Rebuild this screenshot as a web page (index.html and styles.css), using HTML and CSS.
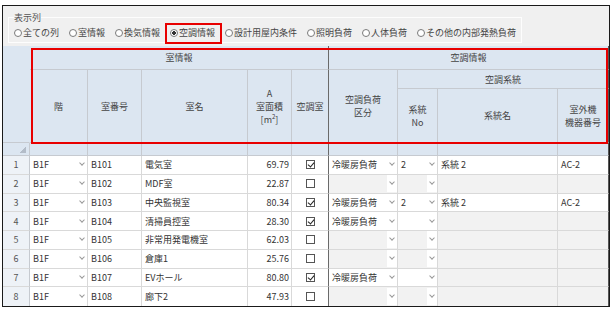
FILE: index.html
```
<!doctype html>
<html>
  <head>
    <title>空調情報</title>
    <meta charset="utf-8">
    <link rel="stylesheet" href="styles.css">
  </head>
  <body>
    <div class="frame">
      <div class="opts">
        <fieldset class="cols">
          <legend>表示列</legend>
          <div class="rbs">
            <label class="rb"><i></i>全ての列</label>
            <label class="rb"><i></i>室情報</label>
            <label class="rb"><i></i>換気情報</label>
            <label class="rb on sel"><i></i>空調情報</label>
            <label class="rb"><i></i>設計用屋内条件</label>
            <label class="rb"><i></i>照明負荷</label>
            <label class="rb"><i></i>人体負荷</label>
            <label class="rb"><i></i>その他の内部発熱負荷</label>
          </div>
        </fieldset>
      </div>

      <div class="gridwrap">
        <table class="grid">
          <colgroup>
            <col class="c0"><col class="c1"><col class="c2"><col class="c3"><col class="c4">
            <col class="c5"><col class="c6"><col class="c7"><col class="c8"><col class="c9">
          </colgroup>
          <thead>
            <tr class="h1">
              <th class="corner" rowspan="3"></th>
              <th class="fz" colspan="5">室情報</th>
              <th colspan="4">空調情報</th>
            </tr>
            <tr class="h2">
              <th rowspan="2">階</th>
              <th rowspan="2">室番号</th>
              <th rowspan="2">室名</th>
              <th rowspan="2">A<br>室面積<br>[m<sup>2</sup>]</th>
              <th class="fz" rowspan="2">空調室</th>
              <th rowspan="2">空調負荷<br>区分</th>
              <th colspan="3">空調系統</th>
            </tr>
            <tr class="h3">
              <th>系統<br>No</th>
              <th>系統名</th>
              <th>室外機<br>機器番号</th>
            </tr>
            <tr class="flt">
              <th class="tri"></th><th></th><th></th><th></th><th></th>
              <th class="fz"></th><th></th><th></th><th></th><th></th>
            </tr>
          </thead>
          <tbody>
            <tr>
              <td class="no">1</td><td class="dd">B1F<b></b></td><td>B101</td><td>電気室</td><td class="num">69.79</td>
              <td class="fz ck"><span class="cb on"></span></td>
              <td class="dd">冷暖房負荷<b></b></td><td class="dd">2<b></b></td><td>系統 2</td><td>AC-2</td>
            </tr>
            <tr>
              <td class="no">2</td><td class="dd">B1F<b></b></td><td>B102</td><td>MDF室</td><td class="num">22.87</td>
              <td class="fz ck"><span class="cb"></span></td>
              <td class="dd ro"><b></b></td><td class="dd ro"><b></b></td><td class="ro"></td><td class="ro"></td>
            </tr>
            <tr>
              <td class="no">3</td><td class="dd">B1F<b></b></td><td>B103</td><td>中央監視室</td><td class="num">80.34</td>
              <td class="fz ck"><span class="cb on"></span></td>
              <td class="dd">冷暖房負荷<b></b></td><td class="dd">2<b></b></td><td>系統 2</td><td>AC-2</td>
            </tr>
            <tr>
              <td class="no">4</td><td class="dd">B1F<b></b></td><td>B104</td><td>清掃員控室</td><td class="num">28.30</td>
              <td class="fz ck"><span class="cb on"></span></td>
              <td class="dd">冷暖房負荷<b></b></td><td class="dd"><b></b></td><td class="ro"></td><td class="ro"></td>
            </tr>
            <tr>
              <td class="no">5</td><td class="dd">B1F<b></b></td><td>B105</td><td>非常用発電機室</td><td class="num">62.03</td>
              <td class="fz ck"><span class="cb"></span></td>
              <td class="dd ro"><b></b></td><td class="dd ro"><b></b></td><td class="ro"></td><td class="ro"></td>
            </tr>
            <tr>
              <td class="no">6</td><td class="dd">B1F<b></b></td><td>B106</td><td>倉庫1</td><td class="num">25.76</td>
              <td class="fz ck"><span class="cb"></span></td>
              <td class="dd ro"><b></b></td><td class="dd ro"><b></b></td><td class="ro"></td><td class="ro"></td>
            </tr>
            <tr>
              <td class="no">7</td><td class="dd">B1F<b></b></td><td>B107</td><td>EVホール</td><td class="num">80.80</td>
              <td class="fz ck"><span class="cb on"></span></td>
              <td class="dd">冷暖房負荷<b></b></td><td class="dd"><b></b></td><td class="ro"></td><td class="ro"></td>
            </tr>
            <tr>
              <td class="no">8</td><td class="dd">B1F<b></b></td><td>B108</td><td>廊下2</td><td class="num">47.93</td>
              <td class="fz ck"><span class="cb"></span></td>
              <td class="dd ro"><b></b></td><td class="dd ro"><b></b></td><td class="ro"></td><td class="ro"></td>
            </tr>
          </tbody>
        </table>
        <div class="hl"></div>
      </div>
    </div>
  </body>
</html>
```
FILE: styles.css
```
* {
  box-sizing: border-box;
}

body {
  margin: 0;
  background: #fff;
  font: 9px "Noto Sans CJK JP", "Noto Sans", sans-serif;
  color: #333;
}

.frame {
  margin: 5px 0 0 2px;
  width: 608px;
  border: 1px solid #1a1a1a;
}

/* column picker */

.opts {
  height: 40px;
  background: #f0f0f0;
  padding: 6px 0 0 5px;
}

.cols {
  margin: 0;
  width: 514px;
  padding: 4px 5px 3px;
  border: 1px solid #fdfdfd;
  box-shadow: inset 0 0 0 0 #fff;
}

.cols legend {
  padding: 0;
  line-height: 11px;
  color: #555;
}

.rbs {
  display: flex;
  gap: 10px;
  line-height: 12px;
}

.rb {
  display: flex;
  align-items: center;
  color: #444;
  white-space: nowrap;
}

.rb i {
  width: 8px;
  height: 8px;
  margin-right: 1px;
  border: 1px solid #7a7a7a;
  border-radius: 50%;
  background: #fff;
}

.rb.on i {
  background: radial-gradient(circle, #333 0 1.6px, #fff 2px);
}

.rb.sel {
  padding: 2px 5px 3px 3px;
  margin: -4px -7px -5px -5px;
  border: 2px solid #e80000;
}

/* grid */

.gridwrap {
  position: relative;
}

.grid {
  width: 606px;
  table-layout: fixed;
  border-collapse: separate;
  border-spacing: 0;
}

.c0 { width: 27px; }
.c1 { width: 58px; }
.c2 { width: 54px; }
.c3 { width: 106px; }
.c4 { width: 44px; }
.c5 { width: 37px; }
.c6 { width: 69px; }
.c7 { width: 40px; }
.c8 { width: 120px; }
.c9 { width: 51px; }

.grid th {
  background: #dce6f1;
  font-weight: normal;
  color: #444;
  line-height: 13px;
  padding: 0;
  border-right: 1px solid #c6cad0;
  border-bottom: 1px solid #c6cad0;
  vertical-align: middle;
}

.grid th:last-child,
.grid td:last-child {
  border-right-color: #555;
}

.grid sup {
  font-size: 6px;
  line-height: 0;
}

.h1 { height: 24px; }
.h2 { height: 19px; }
.h3 { height: 54px; }
.flt { height: 13px; }

.grid .corner {
  border-right-color: #dce6f1;
}

.grid .tri {
  background: #dce6f1 linear-gradient(135deg, transparent 50%, #b3bcc8 50%) no-repeat right 3px bottom 2px / 6px 6px;
}

.grid tbody tr {
  height: 18.75px;
}

.grid td {
  padding: 0 3px;
  line-height: 17px;
  white-space: nowrap;
  overflow: hidden;
  border-right: 1px solid #d9d9d9;
  border-bottom: 1px solid #d9d9d9;
  background: #fff;
}

.grid tbody tr:last-child td {
  border-bottom: none;
}

.grid .fz {
  border-right-color: #6a6a6a;
}

.grid .no {
  text-align: center;
  color: #555;
  background: #eef2f7;
  border-right-color: #c6cad0;
}

.grid .num {
  text-align: right;
  padding-right: 2px;
}

.grid .ro {
  background: #f2f2f2;
}

.grid .dd {
  padding-right: 0;
}

.dd b {
  float: right;
  width: 10px;
  height: 17px;
  background: #fff;
}

.dd b::after {
  content: '';
  display: block;
  width: 3px;
  height: 3px;
  margin: 5px auto 0;
  border-right: 1px solid #999;
  border-bottom: 1px solid #999;
  transform: rotate(45deg);
}

.grid .ck {
  text-align: center;
  padding: 0;
}

.cb {
  display: inline-block;
  width: 9px;
  height: 9px;
  margin-top: 4px;
  vertical-align: top;
  border: 1px solid #555;
  background: #fff;
  position: relative;
}

.cb.on::after {
  content: '';
  position: absolute;
  left: 2px;
  top: 0;
  width: 3px;
  height: 5px;
  border-right: 1.5px solid #222;
  border-bottom: 1.5px solid #222;
  transform: rotate(40deg);
}

.hl {
  position: absolute;
  left: 28px;
  top: 2px;
  width: 577px;
  height: 96px;
  border: 2px solid #e80000;
  pointer-events: none;
}
```
